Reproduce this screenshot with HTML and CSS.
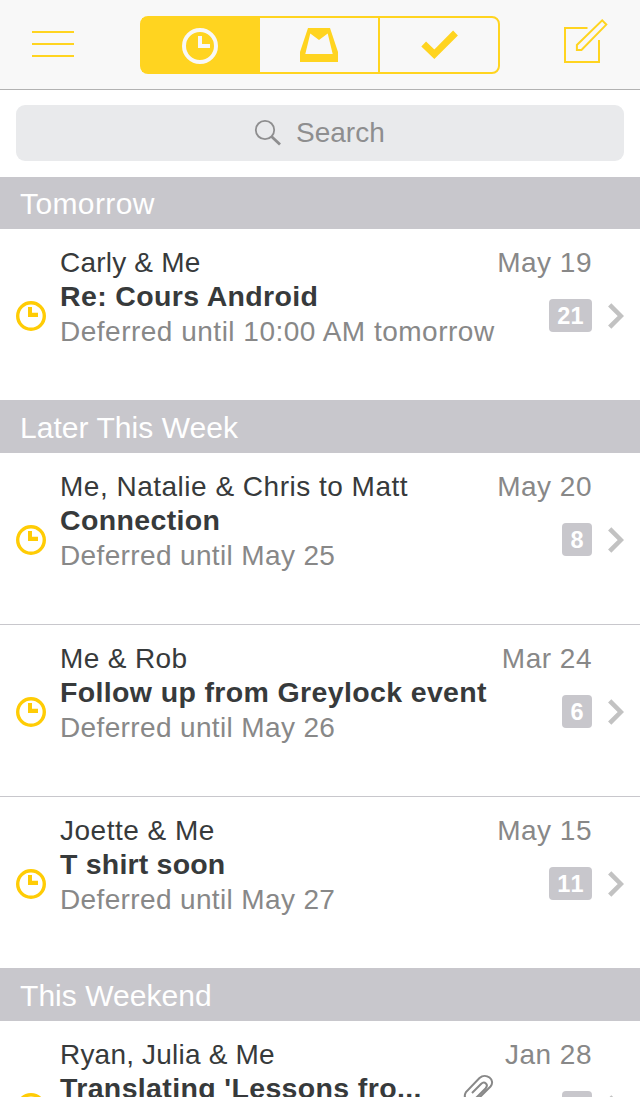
FILE: index.html
```html
<!DOCTYPE html>
<html lang="en">
<head>
<meta charset="utf-8">
<title>Mailbox</title>
<link rel="stylesheet" href="styles.css">
</head>
<body>
<svg class="defs" width="0" height="0">
  <symbol id="clock" viewBox="0 0 30 30"><circle cx="15" cy="15" r="13.3" fill="none" stroke="currentColor" stroke-width="3.4"/><path d="M12 6h4v5.700h6v4.300H12z" fill="currentColor"/></symbol>
  <symbol id="chevron" viewBox="0 0 16 26"><path d="M1.700 1.8L12.8 13 1.700 24.2" fill="none" stroke="currentColor" stroke-width="4.600"/></symbol>
</svg>
<div class="screen">
  <header class="topbar">
    <svg class="menu" width="42" height="26"><path d="M0 1h42M0 13h42M0 25h42" stroke="currentColor" stroke-width="2"/></svg>
    <nav class="tabs">
      <div class="tab active"><svg width="36" height="36"><circle cx="18" cy="18" r="16" fill="none" stroke="currentColor" stroke-width="4"/><path d="M16 8h4v8h8v4H16z" fill="currentColor"/></svg></div>
      <div class="tab"><svg width="38" height="34"><path fill-rule="evenodd" d="M8 0H30L38 24V34H0V24ZM10.300 5.500L5.300 26H32.700L27.700 5.500L19 12Z" fill="currentColor"/></svg></div>
      <div class="tab"><svg class="check" width="38" height="32"><path d="M3.700 15L14.3 25.300L35.500 4" fill="none" stroke="currentColor" stroke-width="6.8"/></svg></div>
    </nav>
    <svg class="compose" width="44" height="44"><path d="M23.500 9H1V43H35V21M12.900 31V26L38.200 1.400L42.300 5.600L17.500 31Z" fill="none" stroke="currentColor" stroke-width="2"/></svg>
  </header>
  <div class="searchbar"><div class="search">
    <svg width="28" height="28"><circle cx="11" cy="11" r="9.200" fill="none" stroke="currentColor" stroke-width="1.8"/><path d="M17.500 17.500L26 25.500" stroke="currentColor" stroke-width="2.800"/></svg>
    <span>Search</span>
  </div></div>

  <h2 class="section first">Tomorrow</h2>
  <article class="row last">
    <svg class="clock"><use href="#clock"/></svg>
    <div class="text"><div class="from snug">Carly &amp; Me</div><div class="subject">Re: Cours Android</div><div class="note loose">Deferred until 10:00 AM tomorrow</div></div>
    <div class="meta"><div class="date">May 19</div><div class="count">21</div></div>
    <svg class="chevron"><use href="#chevron"/></svg>
  </article>

  <h2 class="section">Later This Week</h2>
  <article class="row">
    <svg class="clock"><use href="#clock"/></svg>
    <div class="text"><div class="from loose">Me, Natalie &amp; Chris to Matt</div><div class="subject">Connection</div><div class="note">Deferred until May 25</div></div>
    <div class="meta"><div class="date">May 20</div><div class="count">8</div></div>
    <svg class="chevron"><use href="#chevron"/></svg>
  </article>
  <article class="row">
    <svg class="clock"><use href="#clock"/></svg>
    <div class="text"><div class="from">Me &amp; Rob</div><div class="subject">Follow up from Greylock event</div><div class="note">Deferred until May 26</div></div>
    <div class="meta"><div class="date">Mar 24</div><div class="count">6</div></div>
    <svg class="chevron"><use href="#chevron"/></svg>
  </article>
  <article class="row last">
    <svg class="clock"><use href="#clock"/></svg>
    <div class="text"><div class="from loose">Joette &amp; Me</div><div class="subject snug">T shirt soon</div><div class="note">Deferred until May 27</div></div>
    <div class="meta"><div class="date">May 15</div><div class="count">11</div></div>
    <svg class="chevron"><use href="#chevron"/></svg>
  </article>

  <h2 class="section">This Weekend</h2>
  <article class="row">
    <svg class="clock"><use href="#clock"/></svg>
    <div class="text"><div class="from snug">Ryan, Julia &amp; Me</div><div class="subject">Translating 'Lessons fro...</div></div>
    <svg class="clip" width="32" height="34"><path d="M10 20L19 11C22.500 7.500 27 11.500 23.500 15.500L12 27C8 31 0 26 4 19L17.500 5C24 -1 34 7 28.500 13.500L15 27" fill="none" stroke="currentColor" stroke-width="2"/></svg>
    <div class="meta"><div class="date">Jan 28</div><div class="count">2</div></div>
    <svg class="chevron"><use href="#chevron"/></svg>
  </article>
</div>
</body>
</html>
```
FILE: styles.css
```css
* { box-sizing: border-box; }
body { margin: 0; background: #fff; font-family: "Liberation Sans", Arial, sans-serif; }
svg { display: block; flex: none; }
.defs { position: absolute; }
.screen { width: 640px; height: 1097px; overflow: hidden; }
.topbar { display: flex; height: 90px; padding: 16px 32px 0; background: #f8f8f8; border-bottom: 1px solid #b2b2b2; color: #ffd420; }
.menu { margin-top: 15px; }
.tabs { display: flex; width: 360px; height: 58px; margin-left: 66px; border: 2px solid #ffd420; border-radius: 8px; }
.tab { display: flex; flex: none; width: 120px; padding-top: 10px; justify-content: center; border-right: 2px solid #ffd420; }
.tab:last-child { width: 118px; border-right: 0; }
.tab.active { width: 118px; padding-right: 2px; background: #ffd420; color: #f8f8f8; border: 0; }
.check { margin-top: 1px; }
.compose { margin: 3px 0 0 64px; }
.searchbar { height: 87px; padding: 15px 16px 0; }
.search { display: flex; height: 56px; padding: 14px 0 0 238px; gap: 14px; border-radius: 9px; background: #e9eaec; color: #8e8e8f; font-size: 28px; line-height: 28px; }
.section { height: 53px; margin: 0; padding-left: 20px; background: #c8c7cc; color: #fff; font-size: 30px; font-weight: 400; line-height: 55px; letter-spacing: 0.05px; }
.section.first { height: 52px; line-height: 54px; letter-spacing: 0.4px; }
.row { display: flex; height: 172px; padding: 17px 16px 0; border-bottom: 1px solid #c8c7cc; font-size: 28px; line-height: 34px; letter-spacing: 0.36px; white-space: nowrap; color: #373a3b; }
.row.last { height: 171px; border-bottom: 0; }
.clock { width: 30px; height: 30px; margin: 55px 14px 0 0; color: #ffcc05; }
.text { flex: 1; min-width: 0; }
.subject { margin-bottom: 2px; font-size: 28.5px; line-height: 33px; font-weight: 700; }
.snug { letter-spacing: 0.2px; }
.loose { letter-spacing: 0.5px; }
.note, .date { color: #888; }
.date { letter-spacing: 0.5px; }
.meta { display: flex; flex-direction: column; align-items: flex-end; margin-right: 16px; }
.count { height: 33px; margin-top: 19px; padding: 0 8.5px; border-radius: 4px; background: #c8c7cc; color: #fff; font-size: 23.5px; font-weight: 700; font-kerning: none; letter-spacing: 0; line-height: 34px; }
.chevron { width: 16px; height: 26px; margin-top: 57px; color: #c2c2c2; }
.clip { margin: 35px 11px 0 0; color: #888; }
```
